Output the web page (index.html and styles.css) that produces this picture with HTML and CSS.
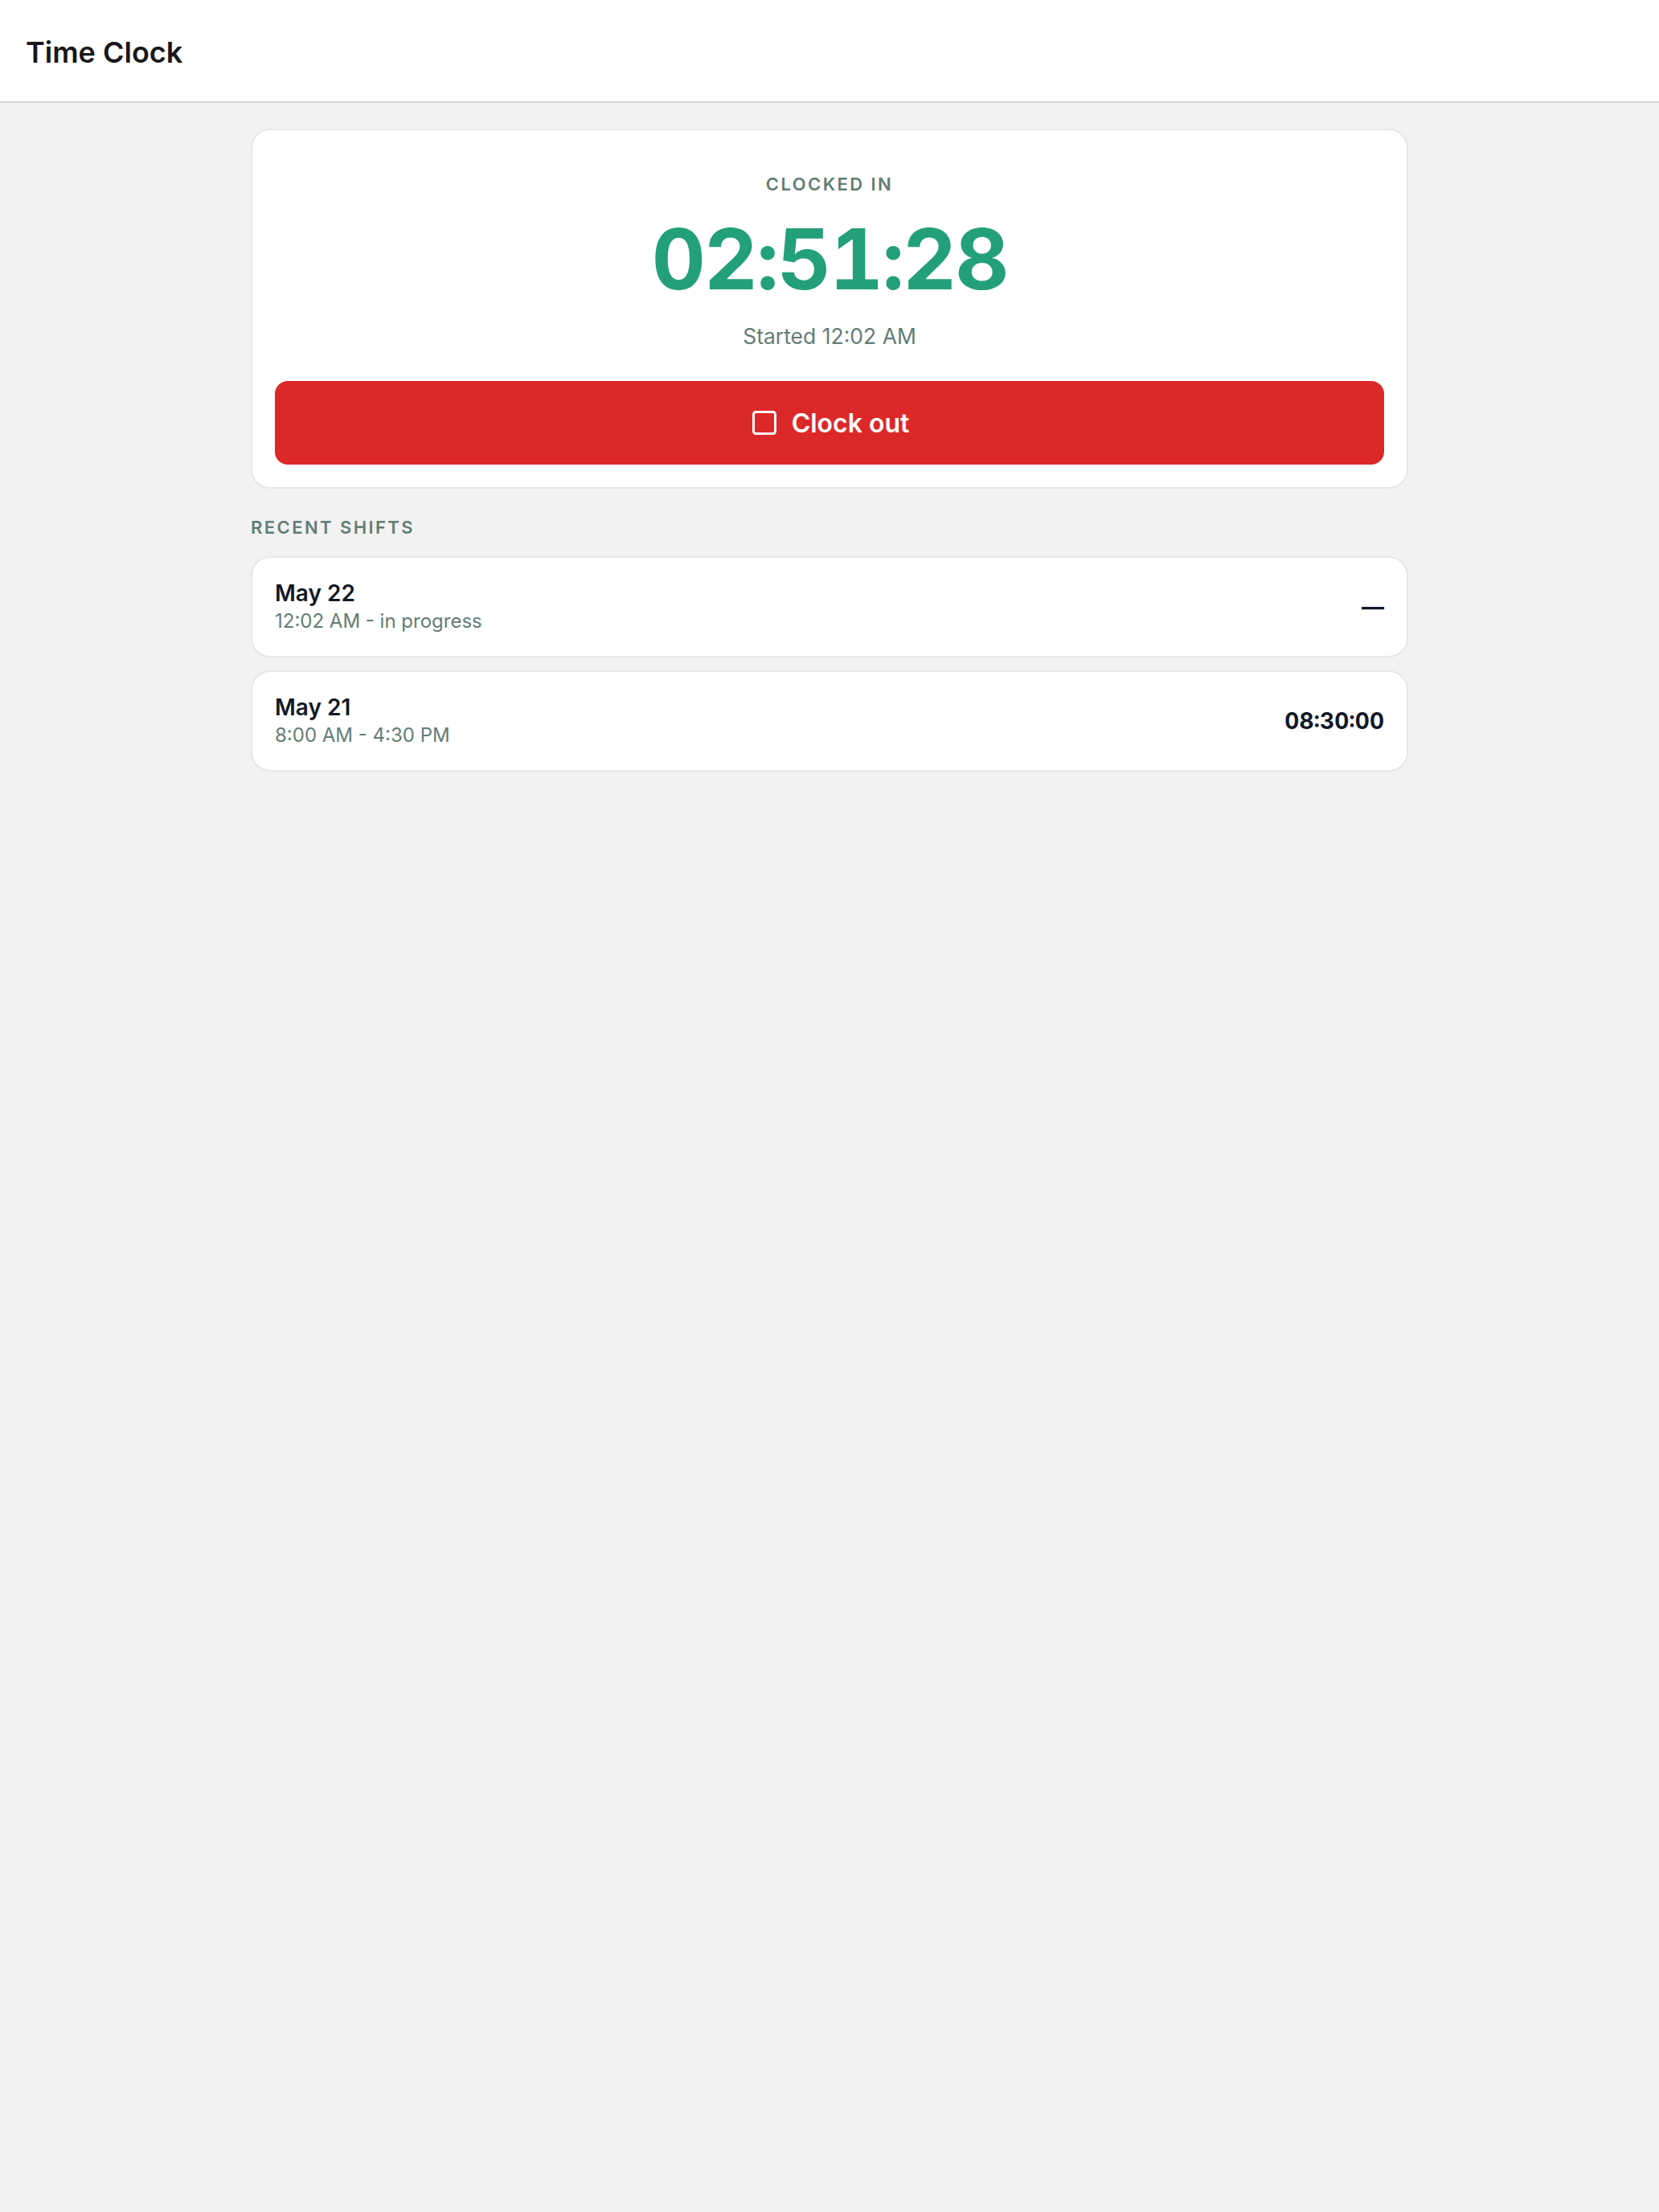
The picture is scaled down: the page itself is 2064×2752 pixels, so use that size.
FILE: index.html
```html
<!DOCTYPE html>
<html lang="en">
<head>
<meta charset="utf-8">
<title>Time Clock</title>
<link rel="stylesheet" href="styles.css">
</head>
<body>
<header class="topbar">
  <h1 class="app-title">Time Clock</h1>
</header>
<main class="content">
  <section class="clock-card">
    <div class="status">
      <div class="status-label">CLOCKED IN</div>
      <div class="timer">02:51:28</div>
      <div class="started">Started 12:02 AM</div>
    </div>
    <button class="clock-btn" type="button">
      <svg class="btn-icon" viewBox="0 0 24 24" width="36" height="36" fill="none" stroke="currentColor" stroke-width="2" stroke-linecap="round" stroke-linejoin="round"><rect x="3" y="3" width="18" height="18" rx="2"/></svg>
      <span>Clock out</span>
    </button>
  </section>
  <h2 class="section-title">RECENT SHIFTS</h2>
  <ul class="shift-list">
    <li class="shift">
      <div class="shift-info">
        <div class="shift-date">May 22</div>
        <div class="shift-range">12:02 AM - in progress</div>
      </div>
      <div class="shift-total">—</div>
    </li>
    <li class="shift">
      <div class="shift-info">
        <div class="shift-date">May 21</div>
        <div class="shift-range">8:00 AM - 4:30 PM</div>
      </div>
      <div class="shift-total">08:30:00</div>
    </li>
  </ul>
</main>
</body>
</html>
```
FILE: styles.css
```css
* { box-sizing: border-box; }
html, body {
  margin: 0;
  padding: 0;
}
body {
  min-height: 100vh;
  background: #f2f2f2;
  font-family: Inter, "Noto Sans", "Liberation Sans", sans-serif;
  color: #111827;
}
.topbar {
  height: 128px;
  background: #ffffff;
  border-bottom: 2px solid #d6d6d6;
  display: flex;
  align-items: center;
  padding: 3px 32px 0;
}
.app-title {
  margin: 0;
  font-size: 36px;
  font-weight: 600;
  color: #18181b;
}
.content {
  max-width: 1440px;
  margin: 0 auto;
  padding-top: 32px;
}
.clock-card {
  background: #ffffff;
  border: 2px solid #e5e7eb;
  border-radius: 24px;
  padding: 28px;
}
.status {
  display: flex;
  flex-direction: column;
  align-items: center;
  padding-top: 23px;
  padding-bottom: 38px;
}
.status-label {
  font-size: 22px;
  line-height: 32px;
  font-weight: 600;
  letter-spacing: 0.11em;
  color: #627d76;
}
.timer {
  margin-top: 20px;
  font-size: 104px;
  line-height: 114px;
  font-weight: 700;
  color: #23a079;
  font-variant-numeric: tabular-nums;
  letter-spacing: -0.02em;
}
.started {
  margin-top: 21px;
  font-size: 26.5px;
  line-height: 36px;
  color: #627d76;
}
.clock-btn {
  width: 100%;
  height: 104px;
  border: none;
  border-radius: 16px;
  background: #dc2828;
  color: #ffffff;
  display: flex;
  align-items: center;
  justify-content: center;
  gap: 16px;
  font-family: inherit;
  font-size: 32px;
  font-weight: 600;
  cursor: pointer;
}
.btn-icon { display: block; }
.section-title {
  margin: 32px 0 20px;
  font-size: 22px;
  line-height: 32px;
  font-weight: 600;
  letter-spacing: 0.11em;
  color: #627d76;
}
.shift-list {
  list-style: none;
  margin: 0;
  padding: 0;
  display: flex;
  flex-direction: column;
  gap: 16px;
}
.shift {
  background: #ffffff;
  border: 2px solid #e5e7eb;
  border-radius: 24px;
  padding: 26px 28px;
  display: flex;
  align-items: center;
  justify-content: space-between;
}
.shift-date {
  font-size: 28px;
  line-height: 36px;
  font-weight: 600;
  color: #111827;
}
.shift-range {
  font-size: 24px;
  line-height: 34px;
  color: #627d76;
}
.shift-total {
  font-size: 28px;
  font-weight: 700;
  color: #111827;
  font-variant-numeric: tabular-nums;
}
```
